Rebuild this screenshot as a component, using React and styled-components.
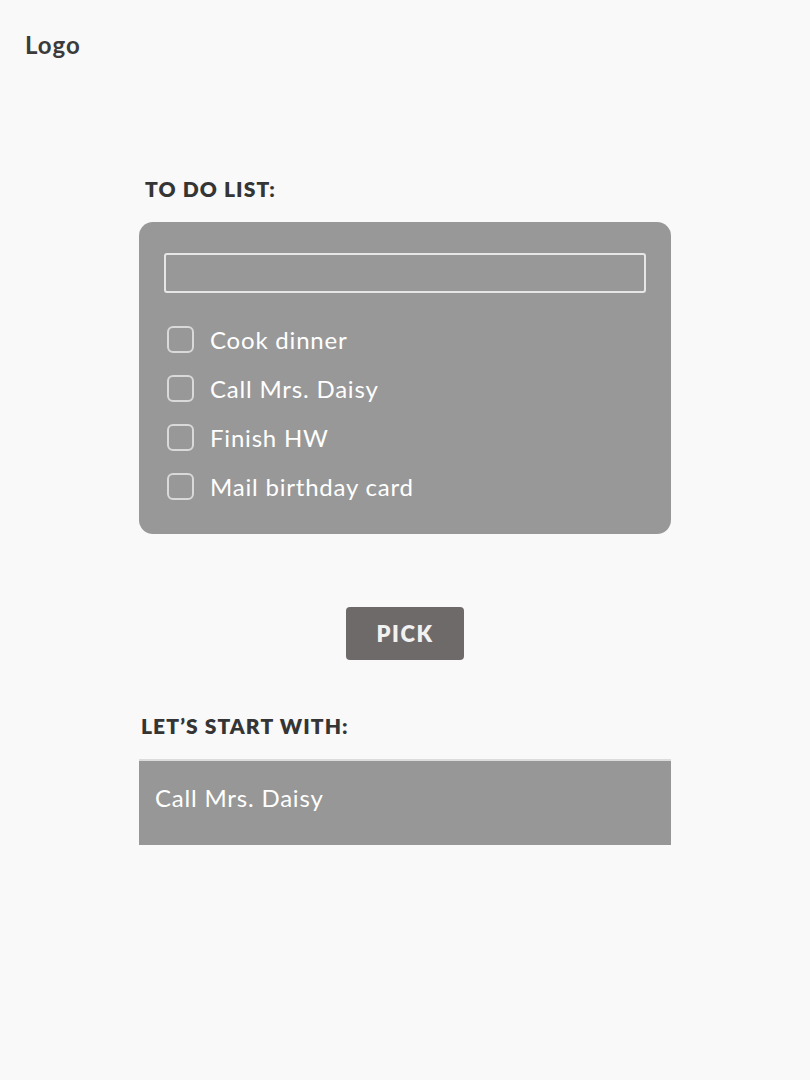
import styled, { createGlobalStyle } from "styled-components";

const Global = createGlobalStyle`
  body {
    margin: 0;
    background: #f9f9f9;
    font-family: Lato, "Noto Sans", sans-serif;
  }
`;

const Page = styled.div`
  width: 810px;
  min-height: 1080px;
  background: #f9f9f9;
`;

const Logo = styled.div`
  padding: 30px 0 0 25px;
  font-size: 24px;
  font-weight: 700;
  color: #3b3b3b;
  line-height: 30px;
  letter-spacing: 1px;
`;

const Main = styled.div`
  width: 532px;
  margin: 0 auto;
  padding-top: 116px;
  display: flex;
  flex-direction: column;
`;

const Heading = styled.h2`
  margin: 0 0 ${(p) => p.$gap || 18}px ${(p) => p.$indent || 0}px;
  font-size: 21px;
  font-weight: 800;
  line-height: 26px;
  color: #353535;
  letter-spacing: 1.1px;
`;

const Card = styled.div`
  background: #989898;
  border-radius: 14px;
  padding: 31px 25px 33px 25px;
`;

const Input = styled.input`
  box-sizing: border-box;
  width: 100%;
  height: 40px;
  border: 2px solid #e6e6e6;
  border-radius: 3px;
  background: transparent;
  outline: none;
  margin-bottom: 31px;
  font: inherit;
  color: #fff;
`;

const List = styled.ul`
  list-style: none;
  margin: 0;
  padding: 0 0 0 3px;
  display: flex;
  flex-direction: column;
  gap: 19px;
`;

const Item = styled.li`
  display: flex;
  align-items: center;
  gap: 16px;
  height: 30px;
  font-size: 24px;
  letter-spacing: 0.8px;
  color: #fff;
`;

const Box = styled.span`
  box-sizing: border-box;
  width: 27px;
  height: 27px;
  border: 2.5px solid #d9d9d9;
  border-radius: 6px;
  flex: none;
`;

const Pick = styled.button`
  align-self: center;
  margin: 73px 0 53px;
  width: 118px;
  height: 53px;
  border: none;
  border-radius: 4px;
  background: #6e6a6a;
  color: #f1f1f1;
  font-family: inherit;
  font-size: 22px;
  font-weight: 800;
  letter-spacing: 1.6px;
`;

const Result = styled.div`
  height: 86px;
  box-sizing: border-box;
  background: #979797;
  border-top: 2px solid #dcdcdc;
  padding: 22px 16px;
  font-size: 24px;
  letter-spacing: 0.8px;
  color: #fff;
`;

const todos = ["Cook dinner", "Call Mrs. Daisy", "Finish HW", "Mail birthday card"];

function App() {
  return (
    <Page>
      <Global />
      <Logo>Logo</Logo>
      <Main>
        <Heading $indent={6} $gap={20}>TO DO LIST:</Heading>
        <Card>
          <Input />
          <List>
            {todos.map((t) => (
              <Item key={t}>
                <Box />
                {t}
              </Item>
            ))}
          </List>
        </Card>
        <Pick>PICK</Pick>
        <Heading $indent={2} $gap={20}>LET’S START WITH:</Heading>
        <Result>Call Mrs. Daisy</Result>
      </Main>
    </Page>
  );
}

export default App;
